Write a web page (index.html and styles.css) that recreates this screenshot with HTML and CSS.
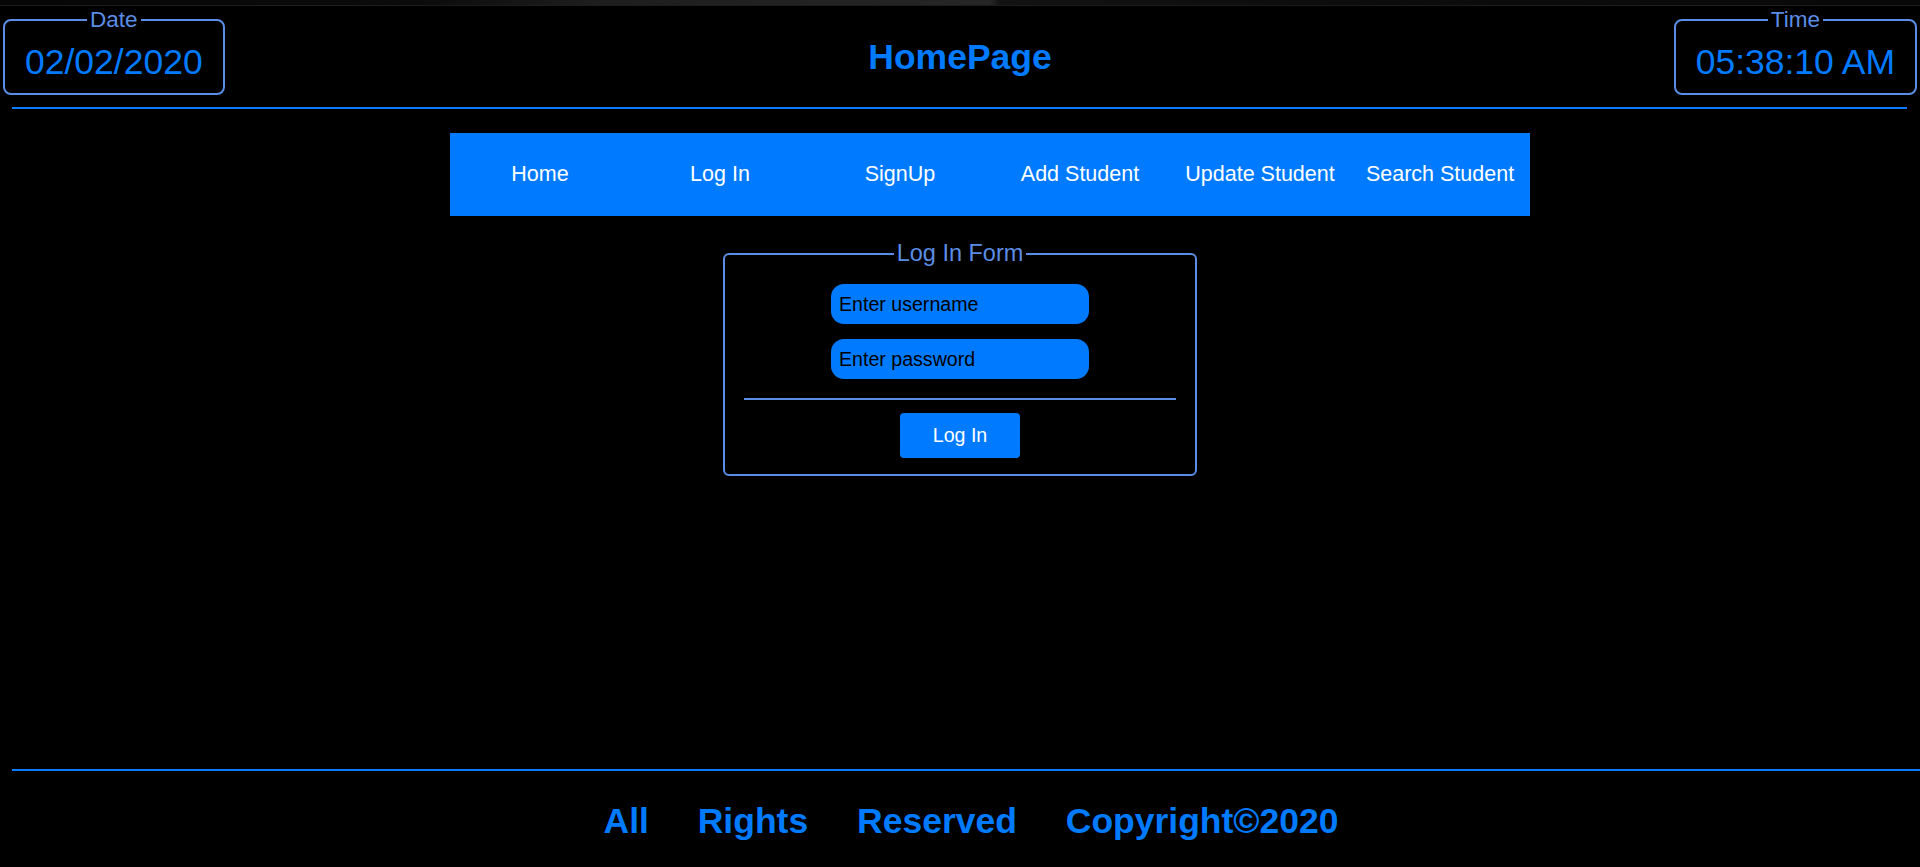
FILE: index.html
```html
<!DOCTYPE html>
<html lang="en">
<head>
<meta charset="utf-8">
<title>HomePage</title>
<link rel="stylesheet" href="styles.css">
</head>
<body>
<div class="top-strip"></div>
<header class="header">
  <fieldset class="clock clock-date">
    <legend class="clock-legend">Date</legend>
    <div class="clock-value">02/02/2020</div>
  </fieldset>
  <h1 class="title">HomePage</h1>
  <fieldset class="clock clock-time">
    <legend class="clock-legend">Time</legend>
    <div class="clock-value">05:38:10 AM</div>
  </fieldset>
</header>
<hr class="header-rule">
<div class="nav-wrap">
  <nav class="nav">
    <a class="nav-item" href="#">Home</a>
    <a class="nav-item" href="#">Log In</a>
    <a class="nav-item" href="#">SignUp</a>
    <a class="nav-item" href="#">Add Student</a>
    <a class="nav-item" href="#">Update Student</a>
    <a class="nav-item" href="#">Search Student</a>
  </nav>
</div>
<main class="main">
  <form class="login">
    <fieldset class="login-box">
      <legend class="login-legend">Log In Form</legend>
      <input class="field" type="text" placeholder="Enter username">
      <input class="field" type="password" placeholder="Enter password">
      <hr class="login-rule">
      <button class="login-btn" type="button">Log In</button>
    </fieldset>
  </form>
</main>
<footer class="footer">
  <hr class="footer-rule">
  <p class="footer-text">All Rights Reserved Copyright©2020</p>
</footer>
</body>
</html>
```

FILE: styles.css
```css
html, body {
  margin: 0;
  padding: 0;
}

body {
  background: #000;
  height: 867px;
  overflow: hidden;
  display: flex;
  flex-direction: column;
  font-family: "Liberation Sans", Arial, sans-serif;
}

.top-strip {
  height: 5px;
  border-bottom: 1px solid #1c1c1c;
  background: linear-gradient(to right, #060606 0, #0b0b0b 420px, #1e1e1e 600px, #262626 990px, #121212 1000px, #0d0d0d 1300px, #080808 100%);
  flex: none;
}

.header {
  display: grid;
  grid-template-columns: 1fr auto 1fr;
  align-items: start;
  padding: 0 3px;
  margin-top: 1px;
}

.clock {
  margin: 0;
  border: 2px solid #5b8de6;
  border-radius: 8px;
  padding: 9px 20px 10px;
  min-width: 0;
}

.clock-date {
  justify-self: start;
}

.clock-time {
  justify-self: end;
}

.clock-legend {
  margin: 0 auto;
  padding: 0 3px;
  font-size: 22.5px;
  line-height: 26px;
  color: #5b8de6;
}

.clock-value {
  font-size: 35.5px;
  line-height: 41px;
  color: #007bff;
  white-space: nowrap;
}

.title {
  margin: 30px 0 0;
  font-size: 35.5px;
  line-height: 41px;
  font-weight: bold;
  color: #007bff;
  text-align: center;
}

.header-rule {
  border: 0;
  height: 2px;
  background: #0a7bff;
  margin: 12px 13px 0 12px;
  flex: none;
}

.nav-wrap {
  display: flex;
  justify-content: center;
  padding-left: 60px;
  margin-top: 24px;
}

.nav {
  display: flex;
  background: #007bff;
  height: 83px;
}

.nav-item {
  width: 180px;
  display: flex;
  align-items: center;
  justify-content: center;
  color: #fff;
  text-decoration: none;
  font-size: 21.5px;
  white-space: nowrap;
}

.main {
  flex: 1;
  display: flex;
  justify-content: center;
  align-items: flex-start;
  padding-top: 24px;
}

.login {
  margin: 0;
}

.login-box {
  margin: 0;
  width: 474px;
  box-sizing: border-box;
  border: 2px solid #5b8de6;
  border-radius: 6px;
  padding: 17px 19px 16px;
  display: flex;
  flex-direction: column;
  align-items: center;
}

.login-legend {
  margin: 0 auto;
  padding: 0 3px;
  font-size: 23.5px;
  line-height: 27px;
  color: #5b8de6;
}

.field {
  width: 258px;
  height: 40px;
  box-sizing: border-box;
  border: 0;
  border-radius: 13px;
  background: #007bff;
  color: #000;
  padding: 0 8px;
  font-family: "Liberation Sans", Arial, sans-serif;
  font-size: 19.6px;
  outline: none;
}

.field + .field {
  margin-top: 15px;
}

.field::placeholder {
  color: #000;
  opacity: 1;
}

.login-rule {
  align-self: stretch;
  border: 0;
  height: 2px;
  background: #5b8de6;
  margin: 19px 0 13px;
}

.login-btn {
  width: 120px;
  height: 45px;
  border: 0;
  border-radius: 4px;
  background: #007bff;
  color: #fff;
  font-family: "Liberation Sans", Arial, sans-serif;
  font-size: 19.6px;
  padding: 0;
}

.footer {
  flex: none;
  margin-left: 12px;
}

.footer-rule {
  border: 0;
  height: 2px;
  background: #0a7bff;
  margin: 0;
}

.footer-text {
  margin: 30px 0 25px;
  padding-left: 10px;
  text-align: center;
  font-size: 35.5px;
  line-height: 41px;
  font-weight: bold;
  color: #007bff;
  word-spacing: 39px;
  white-space: nowrap;
}
```
